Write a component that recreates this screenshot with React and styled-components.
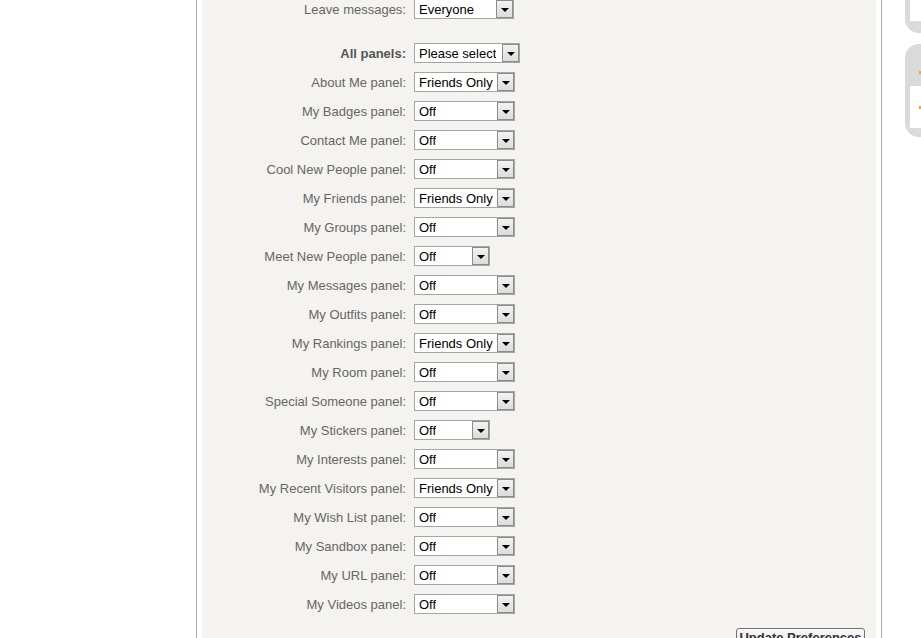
import React from "react";
import styled, { createGlobalStyle } from "styled-components";

const rows = [
  { label: "About Me panel:", value: "Friends Only", width: 101 },
  { label: "My Badges panel:", value: "Off", width: 101 },
  { label: "Contact Me panel:", value: "Off", width: 101 },
  { label: "Cool New People panel:", value: "Off", width: 101 },
  { label: "My Friends panel:", value: "Friends Only", width: 101 },
  { label: "My Groups panel:", value: "Off", width: 101 },
  { label: "Meet New People panel:", value: "Off", width: 76 },
  { label: "My Messages panel:", value: "Off", width: 101 },
  { label: "My Outfits panel:", value: "Off", width: 101 },
  { label: "My Rankings panel:", value: "Friends Only", width: 101 },
  { label: "My Room panel:", value: "Off", width: 101 },
  { label: "Special Someone panel:", value: "Off", width: 101 },
  { label: "My Stickers panel:", value: "Off", width: 76 },
  { label: "My Interests panel:", value: "Off", width: 101 },
  { label: "My Recent Visitors panel:", value: "Friends Only", width: 101 },
  { label: "My Wish List panel:", value: "Off", width: 101 },
  { label: "My Sandbox panel:", value: "Off", width: 101 },
  { label: "My URL panel:", value: "Off", width: 101 },
  { label: "My Videos panel:", value: "Off", width: 101 },
];

const Global = createGlobalStyle`
  html, body {
    margin: 0;
    padding: 0;
    background: #ffffff;
    overflow: hidden;
  }
  body {
    font-family: "Liberation Sans", Arial, sans-serif;
  }
`;

const Page = styled.div`
  display: grid;
  grid-template-columns: 196px 686px 1fr;
  height: 638px;
  overflow: hidden;
`;

const Main = styled.div`
  border-left: 1px solid #a9a9a9;
  border-right: 1px solid #a9a9a9;
  padding: 0 5px;
  background: #ffffff;
`;

const Panel = styled.div`
  background: #f4f3ef;
  height: 100%;
  display: flex;
  flex-direction: column;
  gap: 9px;
`;

const Row = styled.div`
  display: grid;
  grid-template-columns: 212px auto;
  align-items: center;
  height: 20px;
  margin-top: ${(p) => (p.$first ? "-1px" : "0")};
  margin-bottom: ${(p) => (p.$first ? "15px" : "0")};
`;

const Label = styled.span`
  text-align: right;
  padding-right: 8px;
  font-size: 13px;
  color: ${(p) => (p.$bold ? "#555555" : "#666666")};
  font-weight: ${(p) => (p.$bold ? "bold" : "normal")};
  white-space: nowrap;
`;

const SelectBox = styled.div`
  display: flex;
  align-items: center;
  justify-content: space-between;
  box-sizing: border-box;
  height: 20px;
  width: ${(p) => p.$width}px;
  border: 1px solid #a5a5a5;
  background: #ffffff;
  padding: 0 0 0 4px;
`;

const SelectText = styled.span`
  font-size: 13px;
  color: #000000;
  white-space: nowrap;
  overflow: hidden;
`;

const ArrowButton = styled.span`
  display: flex;
  align-items: center;
  justify-content: center;
  box-sizing: border-box;
  width: 17px;
  height: 18px;
  flex-shrink: 0;
  background: linear-gradient(#f2f2f2, #dcdcdc);
  border: 1px solid #8c8c8c;
  &::after {
    content: "";
    border-left: 4px solid transparent;
    border-right: 4px solid transparent;
    border-top: 4px solid #000000;
    margin-top: 1px;
  }
`;

const Footer = styled.div`
  display: flex;
  justify-content: flex-end;
  padding: 5px 11px 0 0;
`;

const Button = styled.button`
  width: 129px;
  height: 20px;
  font-family: "Liberation Sans", Arial, sans-serif;
  font-size: 13px;
  line-height: 16px;
  font-weight: bold;
  color: #333333;
  background: linear-gradient(#fafafa, #e4e4e4);
  border: 1px solid #707070;
  border-radius: 3px;
  padding: 1px 0 0;
  display: flex;
  align-items: flex-start;
  justify-content: center;
`;

const Side = styled.div`
  display: flex;
  flex-direction: column;
  gap: 11px;
  padding-left: 23px;
`;

const TopBox = styled.div`
  height: 33px;
  background: #dadada;
  border-radius: 0 0 0 14px;
  padding: 0 0 12px 5px;
  box-sizing: border-box;
`;

const WhiteInner = styled.div`
  background: #ffffff;
  height: 100%;
`;

const BoxCard = styled.div`
  height: 93px;
  background: #dadada;
  border-radius: 14px 0 0 14px;
  padding: 14px 0 9px 5px;
  box-sizing: border-box;
  display: flex;
  flex-direction: column;
`;

const Dot = styled.span`
  display: block;
  width: 3px;
  height: 3px;
  margin-left: 9px;
  background: #f0a830;
`;

const CardHead = styled.div`
  height: 28px;
  display: flex;
  align-items: center;
`;

const CardBody = styled.div`
  flex: 1;
  background: #ffffff;
  display: flex;
  align-items: center;
`;

const FakeSelect = ({ value, width }) => (
  <SelectBox $width={width}>
    <SelectText>{value}</SelectText>
    <ArrowButton />
  </SelectBox>
);

export default function App() {
  return (
    <>
      <Global />
      <Page>
        <div />
        <Main>
          <Panel>
            <Row $first>
              <Label>Leave messages:</Label>
              <FakeSelect value="Everyone" width={100} />
            </Row>
            <Row>
              <Label $bold>All panels:</Label>
              <FakeSelect value="Please select" width={106} />
            </Row>
            {rows.map((r) => (
              <Row key={r.label}>
                <Label>{r.label}</Label>
                <FakeSelect value={r.value} width={r.width} />
              </Row>
            ))}
            <Footer>
              <Button>Update Preferences</Button>
            </Footer>
          </Panel>
        </Main>
        <Side>
          <TopBox>
            <WhiteInner />
          </TopBox>
          <BoxCard>
            <CardHead>
              <Dot />
            </CardHead>
            <CardBody>
              <Dot />
            </CardBody>
          </BoxCard>
        </Side>
      </Page>
    </>
  );
}
